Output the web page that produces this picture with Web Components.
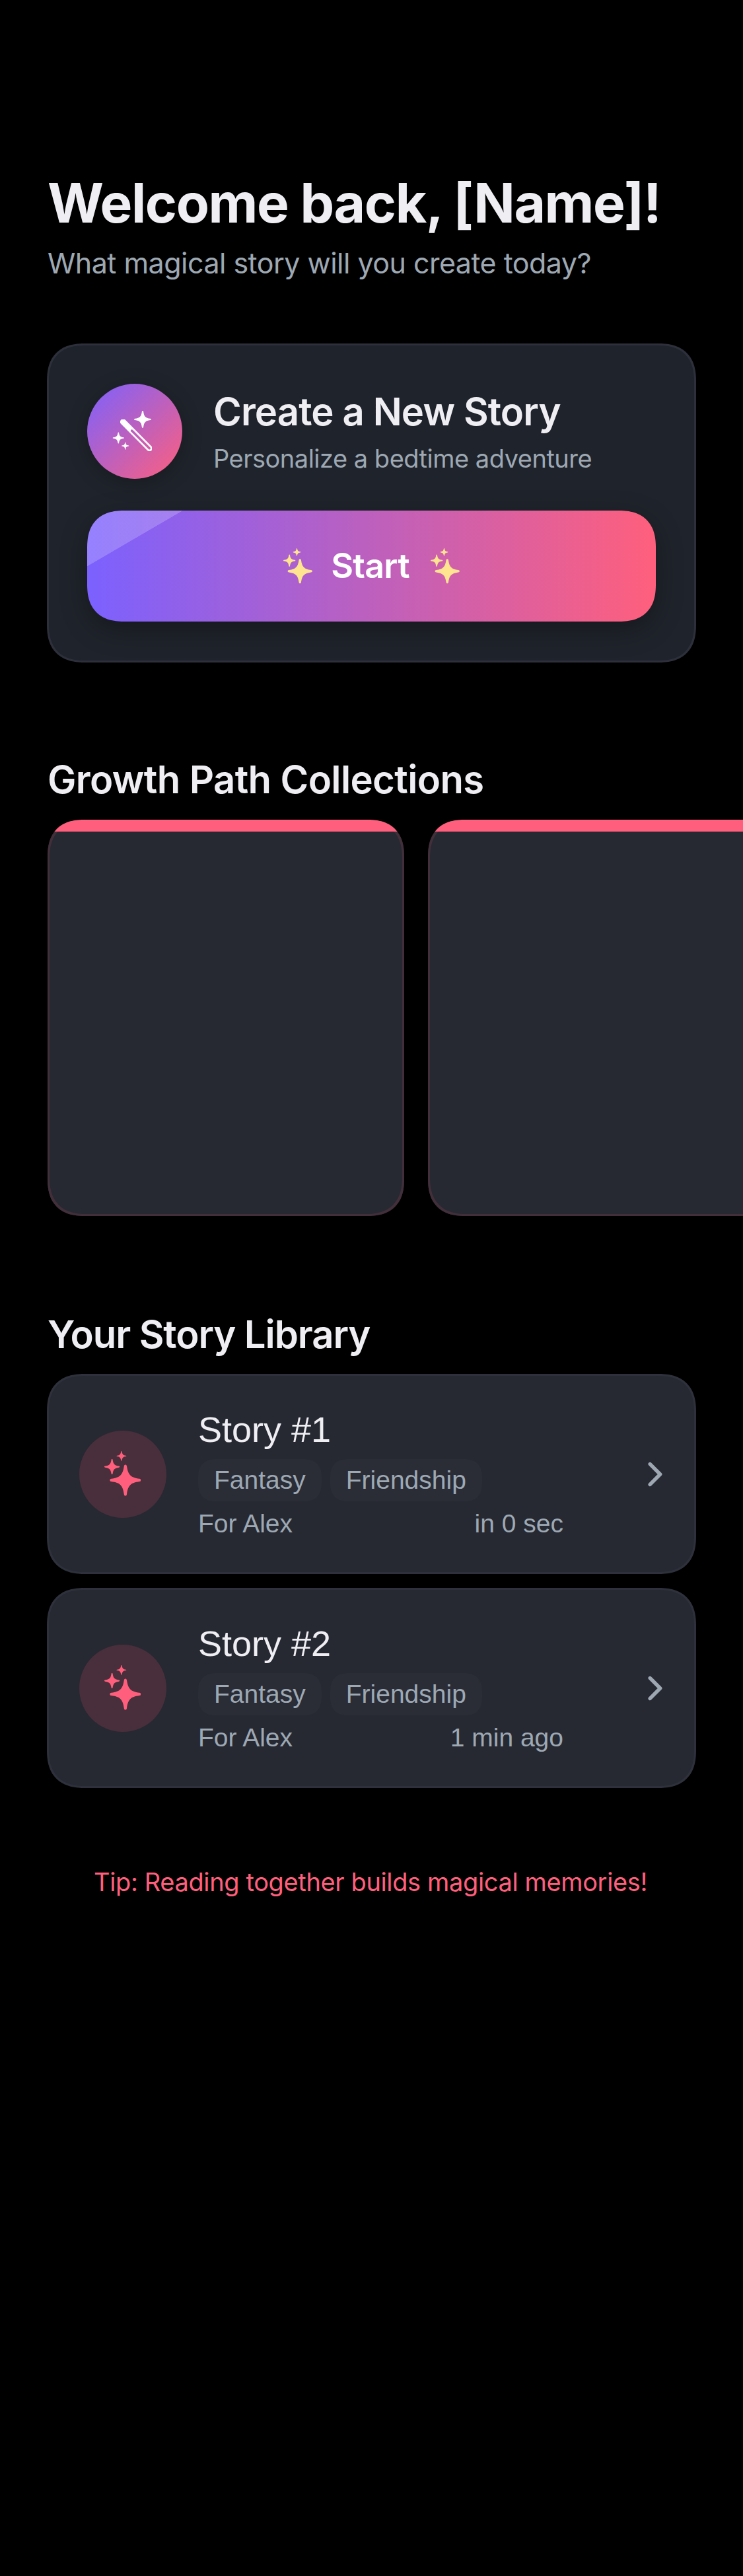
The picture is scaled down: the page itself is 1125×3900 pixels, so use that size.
<!DOCTYPE html>
<html lang="en">
<head>
<meta charset="utf-8">
<title>Story Home</title>
<style>
  html, body { margin: 0; background: #000; }
  body { width: 1125px; height: 3900px; overflow: hidden; font-family: Inter, "Liberation Sans", sans-serif; color: #eeeef3;
    --muted: #9da8b3; --pink: #ff5f7c; --violet: #7b61ff; --surface: #262932; --line: #2e313b; }
</style>
</head>
<body>
<story-home>
  <home-header heading="Welcome back, [Name]!">What magical story will you create today?</home-header>
  <create-card heading="Create a New Story" sub="Personalize a bedtime adventure"><start-button>Start</start-button></create-card>
  <home-section class="growth" heading="Growth Path Collections" style="--head-spacing:-.62px">
    <collection-row><collection-card></collection-card><collection-card></collection-card></collection-row>
  </home-section>
  <home-section class="library" heading="Your Story Library" style="--head-spacing:-1.08px">
    <story-card heading="Story #1" reader="For Alex" when="in 0 sec"><tag-chip>Fantasy</tag-chip><tag-chip>Friendship</tag-chip></story-card>
    <story-card heading="Story #2" reader="For Alex" when="1 min ago"><tag-chip>Fantasy</tag-chip><tag-chip>Friendship</tag-chip></story-card>
  </home-section>
  <reading-tip>Tip: Reading together builds magical memories!</reading-tip>
</story-home>
<script>
const define = (name, render) => customElements.define(name, class extends HTMLElement {
  connectedCallback() {
    if (this.shadowRoot) return;
    this.attachShadow({ mode: 'open' }).innerHTML = render(this);
  }
});

/* Four-pointed star with softened tips, centred on (x, y). */
const star = (x, y, r) => {
  const p = (a, b) => `${(x + a * r).toFixed(2)} ${(y + b * r).toFixed(2)}`;
  return `<path d="M${p(0,-1)}C${p(.06,-1)} ${p(.08,-.96)} ${p(.09,-.9)}C${p(.17,-.34)} ${p(.34,-.17)} ${p(.9,-.09)}C${p(.96,-.08)} ${p(1,-.06)} ${p(1,0)}C${p(1,.06)} ${p(.96,.08)} ${p(.9,.09)}C${p(.34,.17)} ${p(.17,.34)} ${p(.09,.9)}C${p(.08,.96)} ${p(.06,1)} ${p(0,1)}C${p(-.06,1)} ${p(-.08,.96)} ${p(-.09,.9)}C${p(-.17,.34)} ${p(-.34,.17)} ${p(-.9,.09)}C${p(-.96,.08)} ${p(-1,.06)} ${p(-1,0)}C${p(-1,-.06)} ${p(-.96,-.08)} ${p(-.9,-.09)}C${p(-.34,-.17)} ${p(-.17,-.34)} ${p(-.09,-.9)}C${p(-.08,-.96)} ${p(-.06,-1)} ${p(0,-1)}Z"/>`;
};

define('sparkles-icon', () => `
  <style>:host{display:block;flex:none}svg{display:block;width:100%;height:100%;fill:currentColor}</style>
  <svg viewBox="0 0 55.4 67.4">${star(31.9, 44, 23.5)}${star(11.6, 23.6, 11.6)}${star(25.9, 7.4, 7.4)}</svg>`);

define('wand-icon', () => `
  <style>:host{display:block;width:144px;height:144px}svg{display:block;fill:#fff}</style>
  <svg width="144" height="144" viewBox="0 0 144 144">
    ${star(84, 53.9, 12.8)}${star(47.3, 82, 8.6)}${star(57.7, 94.1, 5.6)}
    <mask id="slot"><rect width="144" height="144" fill="#fff"/><path d="M67.6 71.1 94.2 97.7" stroke="#000" stroke-width="3.6" stroke-linecap="round"/></mask>
    <path d="M54.4 57.7 94.3 97.8" stroke="#fff" stroke-width="9" stroke-linecap="round" mask="url(#slot)"/>
  </svg>`);

define('story-home', () => `
  <style>
    :host{display:flex;flex-direction:column;width:1125px}
    ::slotted(home-header){margin:258px 72px 0}
    ::slotted(create-card){margin:95px 71px 0}
    ::slotted(.growth){margin-top:141px}
    ::slotted(.library){margin-top:143px}
    ::slotted(reading-tip){margin:119px 72px 0}
  </style><slot></slot>`);

define('home-header', el => `
  <style>
    :host{display:flex;flex-direction:column;gap:13px;white-space:nowrap}
    h1{margin:0;font-size:82px;line-height:100px;font-weight:700;letter-spacing:-1.4px}
    p{margin:0;font-size:43px;line-height:54px;letter-spacing:-.53px;color:var(--muted)}
  </style>
  <h1>${el.getAttribute('heading')}</h1><p><slot></slot></p>`);

define('create-card', el => `
  <style>
    :host{display:flex;flex-direction:column;gap:48px;box-sizing:border-box;height:483px;padding:58px;
      border:3px solid #2d303b;border-radius:58px;corner-shape:superellipse(1.3);background:#1f232b}
    .row{display:flex;gap:47px;height:144px}
    .disc{flex:none;width:144px;height:144px;border-radius:50%;background:linear-gradient(135deg,var(--violet),var(--pink));box-shadow:0 6px 30px rgba(0,0,0,.25)}
    .copy{display:flex;flex-direction:column;gap:12px;padding-top:6px;white-space:nowrap}
    h2{margin:0;font-size:58px;line-height:72px;font-weight:600;letter-spacing:-.86px}
    p{margin:0;font-size:38px;line-height:47px;letter-spacing:-.5px;color:var(--muted)}
  </style>
  <div class="row">
    <div class="disc"><wand-icon></wand-icon></div>
    <div class="copy"><h2>${el.getAttribute('heading')}</h2><p>${el.getAttribute('sub')}</p></div>
  </div>
  <slot></slot>`);

define('start-button', () => `
  <style>
    :host{display:block}
    button{display:flex;align-items:center;justify-content:center;width:100%;height:168px;margin:0;padding:0;border:0;
      border-radius:57px;corner-shape:superellipse(1.3);color:#fff;
      font:600 52px/60px Inter,"Liberation Sans",sans-serif;letter-spacing:-.7px;
      background:linear-gradient(to bottom right,rgba(255,255,255,.2) 50%,transparent 50.4%) 0 0/144px 84px no-repeat,
        linear-gradient(90deg,var(--violet),var(--pink));
      box-shadow:0 12px 42px rgba(0,0,0,.3)}
    span{margin:0 32px 0 28px}
    sparkles-icon{width:43.8px;height:53.3px;color:#ffe590}
  </style>
  <button><sparkles-icon></sparkles-icon><span><slot></slot></span><sparkles-icon></sparkles-icon></button>`);

define('home-section', el => `
  <style>
    :host{display:block}
    h2{margin:0 72px;font-size:58px;line-height:72px;font-weight:600;letter-spacing:var(--head-spacing);white-space:nowrap}
    .body{display:flex;flex-direction:column;gap:21px;padding-top:24px}
    ::slotted(story-card){margin:0 71px}
  </style>
  <h2>${el.getAttribute('heading')}</h2><div class="body"><slot></slot></div>`);

define('collection-row', () => `
  <style>:host{display:flex;gap:36px;padding:1px 0 0 72px;overflow:hidden}</style><slot></slot>`);

define('collection-card', () => `
  <style>
    :host{display:block;flex:none;width:540px;height:600px;border-radius:57px;corner-shape:superellipse(1.3);
      overflow:hidden;background:var(--surface);box-shadow:inset 0 0 0 3px #422f3a}
    .bar{height:18px;background:var(--pink)}
  </style>
  <div class="bar"></div>`);

define('story-card', el => `
  <style>
    :host{display:flex;box-sizing:border-box;height:303px;padding:0 46px;border:3px solid var(--line);
      border-radius:58px;corner-shape:superellipse(1.3);background:var(--surface);font-family:"Liberation Sans",Arial,sans-serif}
    .disc{flex:none;align-self:center;display:flex;align-items:center;justify-content:center;width:132px;height:132px;border-radius:50%;background:#482f3b;color:var(--pink)}
    sparkles-icon{width:55.4px;height:67.4px;margin:0 1px 1px 0}
    .copy{display:flex;flex-direction:column;width:553px;margin-left:48px;padding-top:50px;white-space:nowrap}
    h3{margin:0;font-size:54px;line-height:62px;font-weight:400}
    .tags{display:flex;gap:13px;margin:14px 0 11px}
    .meta{display:flex;justify-content:space-between;font-size:39px;line-height:45px;color:var(--muted)}
    .chevron{flex:none;align-self:center;margin-left:auto}
  </style>
  <div class="disc"><sparkles-icon></sparkles-icon></div>
  <div class="copy">
    <h3>${el.getAttribute('heading')}</h3>
    <div class="tags"><slot></slot></div>
    <div class="meta"><span>${el.getAttribute('reader')}</span><span>${el.getAttribute('when')}</span></div>
  </div>
  <svg class="chevron" width="25" height="40" viewBox="0 0 25 40" fill="none" stroke="#9da8b3" stroke-width="5.6" stroke-linecap="round" stroke-linejoin="round"><path d="M4.3 4.6 19.6 20 4.3 35.4"/></svg>`);

define('tag-chip', () => `
  <style>:host{display:block;height:64px;padding:0 24px;border-radius:28px;corner-shape:superellipse(1.3);background:#2a2c36;
    font:39px/64px "Liberation Sans",Arial,sans-serif;color:var(--muted)}</style><slot></slot>`);

define('reading-tip', () => `
  <style>:host{display:block;padding-right:3px;text-align:center;white-space:nowrap;font-size:38px;line-height:46px;letter-spacing:-.37px;color:var(--pink)}</style><slot></slot>`);
</script>
</body>
</html>
